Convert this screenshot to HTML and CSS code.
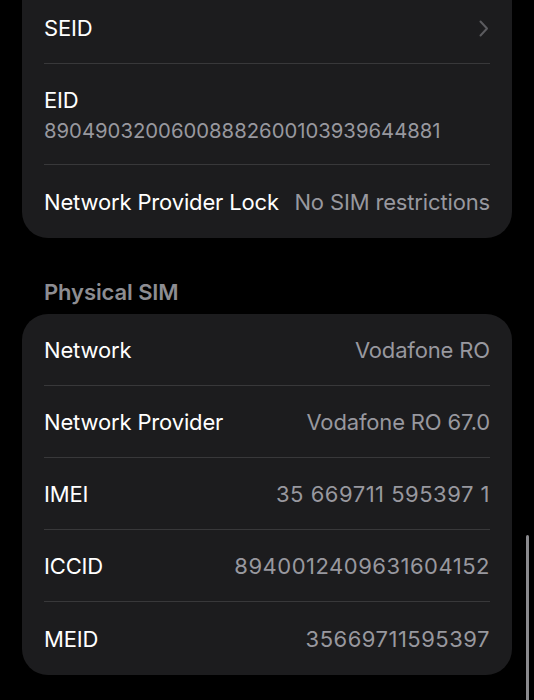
FILE: index.html
```html
<!DOCTYPE html>
<html>
  <head>
    <meta charset="UTF-8" />
    <title>SIM Info</title>
    <link rel="stylesheet" href="styles.css">
  </head>

  <body>
    <div class="screen">
      <div class="card card-top">
        <div class="row row-icon">
          <span class="icon-stub"></span>
        </div>
        <div class="row">
          <span class="label">SEID</span>
          <svg class="chevron" width="10" height="17" viewBox="0 0 10 17">
            <path d="M1.5 1.5 L8 8.5 L1.5 15.5" fill="none" stroke="#5b5b5f" stroke-width="2" stroke-linecap="round" stroke-linejoin="round" />
          </svg>
        </div>
        <div class="row row-tall">
          <span class="label">EID</span>
          <span class="sub">89049032006008882600103939644881</span>
        </div>
        <div class="row">
          <span class="label">Network Provider Lock</span>
          <span class="value">No SIM restrictions</span>
        </div>
      </div>

      <h2 class="section-title">Physical SIM</h2>
      <div class="card">
        <div class="row">
          <span class="label">Network</span>
          <span class="value">Vodafone RO</span>
        </div>
        <div class="row">
          <span class="label">Network Provider</span>
          <span class="value">Vodafone RO 67.0</span>
        </div>
        <div class="row">
          <span class="label">IMEI</span>
          <span class="value num">35 669711 595397 1</span>
        </div>
        <div class="row">
          <span class="label">ICCID</span>
          <span class="value num">8940012409631604152</span>
        </div>
        <div class="row">
          <span class="label">MEID</span>
          <span class="value num">35669711595397</span>
        </div>
      </div>
    </div>

    <div class="scrollbar"></div>
  </body>
</html>
```

FILE: styles.css
```css
body {
  font-family: Inter, "Noto Sans", sans-serif;
  margin: 0;
  padding: 0;
  background-color: #000;
  color: #fff;
  height: 700px;
  overflow: hidden;
}

.screen {
  padding: 0 22px;
  margin-top: -81px;
}

.card {
  background-color: #1c1c1e;
  border-radius: 26px;
}

.row {
  display: flex;
  justify-content: space-between;
  align-items: center;
  height: 72px;
  margin: 0 22px;
  border-bottom: 1px solid #38383a;
  box-sizing: border-box;
}

.row:last-child {
  border-bottom: none;
  height: 73px;
}

.row-icon {
  align-items: flex-end;
  border-bottom: none;
  height: 73px;
}

.icon-stub {
  display: block;
  width: 20px;
  height: 10px;
  margin-bottom: 62px;
  border-radius: 0 0 10px 10px;
  background-color: #48484a;
}

.row-tall {
  flex-direction: column;
  align-items: flex-start;
  justify-content: center;
  gap: 5px;
  height: 101px;
  padding-top: 2px;
}

.label {
  font-size: 22px;
  letter-spacing: -0.15px;
}

.value {
  font-size: 22px;
  letter-spacing: -0.15px;
  color: #98989f;
}

.value.num {
  letter-spacing: 0.5px;
}

.sub {
  font-size: 20.3px;
  color: #98989f;
}

.chevron {
  margin-right: 1px;
  margin-top: 2px;
}

.section-title {
  margin: 41px 0 9px 22px;
  font-size: 22px;
  font-weight: 600;
  line-height: 26px;
  letter-spacing: -0.1px;
  color: #8d8d92;
}

.scrollbar {
  position: fixed;
  right: 5px;
  top: 535px;
  width: 3px;
  height: 180px;
  border-radius: 2px;
  background-color: #8a8a8e;
}
```
